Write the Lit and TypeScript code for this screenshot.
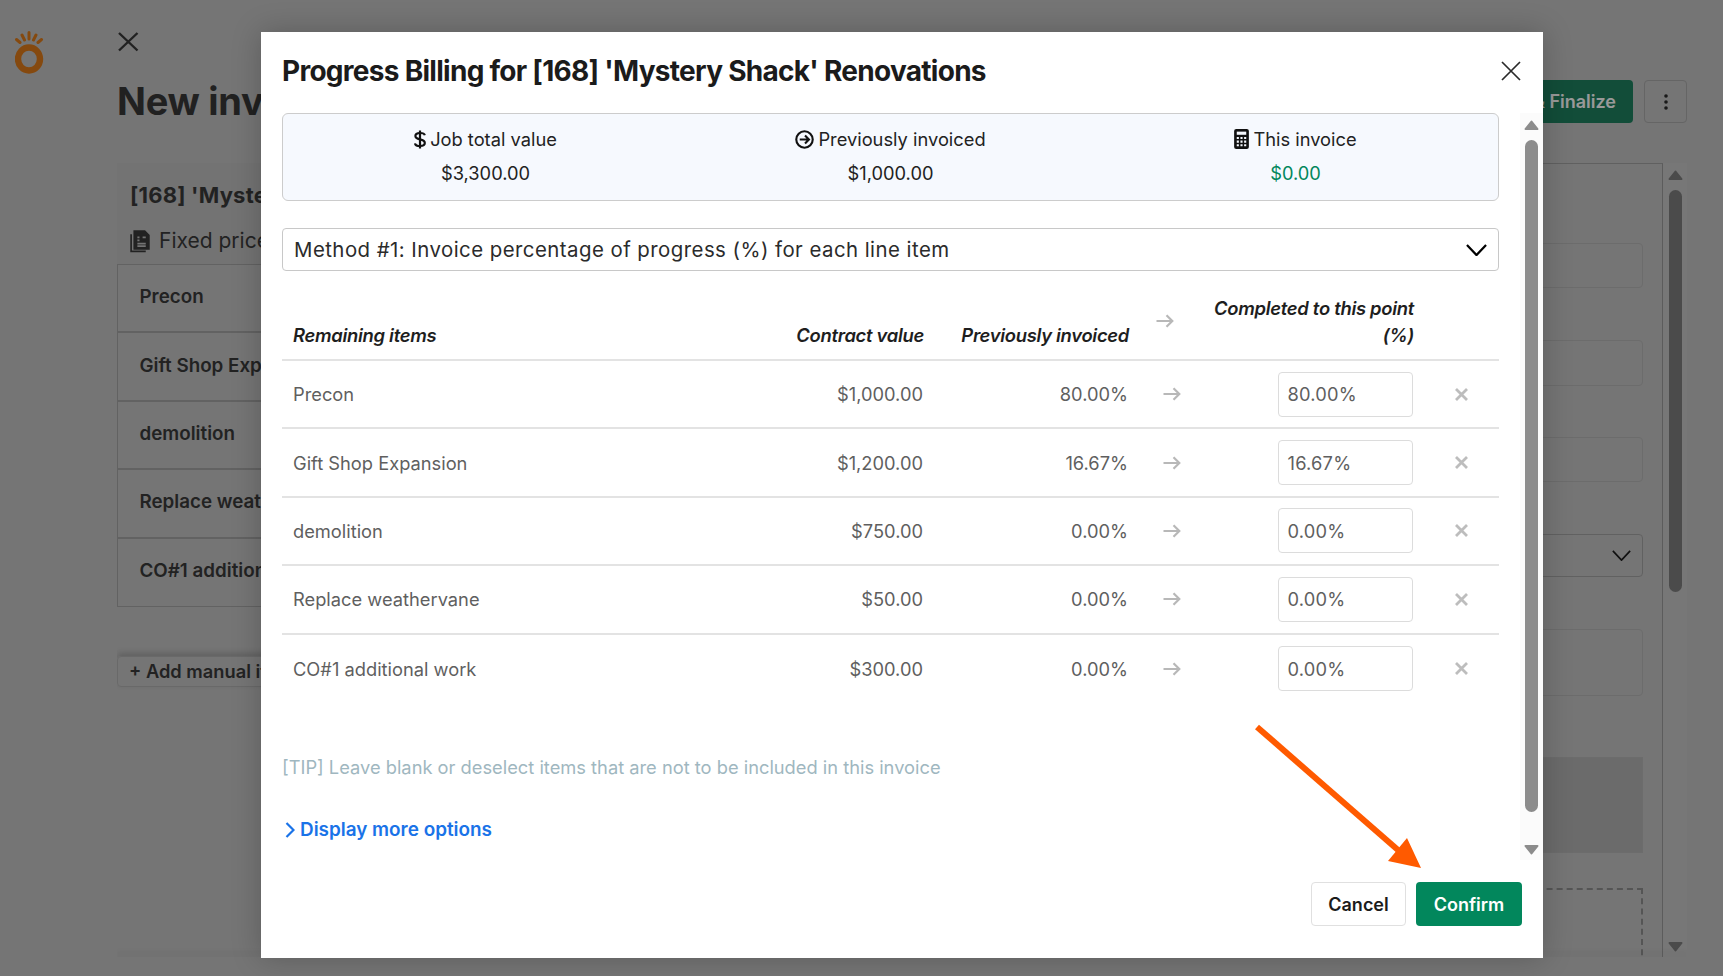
import { LitElement, html, css, svg } from "lit";
import { customElement } from "lit/decorators.js";

const rows = [
  ["Precon", "$1,000.00", "80.00%"],
  ["Gift Shop Expansion", "$1,200.00", "16.67%"],
  ["demolition", "$750.00", "0.00%"],
  ["Replace weathervane", "$50.00", "0.00%"],
  ["CO#1 additional work", "$300.00", "0.00%"],
];

const arrowIcon = html`<svg class="arr" width="18" height="14" viewBox="0 0 18 14" fill="none" stroke="currentColor" stroke-width="2.2"><path d="M0.5 7H16M10.5 1.2L16.3 7L10.5 12.8"/></svg>`;
const chevron = (w: number, h: number, sw: number) => html`<svg width="${w}" height="${h}" viewBox="0 0 22 12" preserveAspectRatio="none" fill="none" stroke="currentColor" stroke-width="${sw}"><path d="M1 1L11 11L21 1"/></svg>`;
const tri = (down: boolean) => html`<svg class="tri" width="15" height="11" viewBox="0 0 15 11" fill="currentColor" stroke="currentColor" stroke-width="2" stroke-linejoin="round">${down ? svg`<path d="M1.5 2H13.5L7.5 9.5Z"/>` : svg`<path d="M7.5 1.5L13.5 9H1.5Z"/>`}</svg>`;

@customElement("app-root")
export class AppRoot extends LitElement {
  static styles = css`
    :host { display: block; position: relative; width: 1723px; height: 976px; overflow: hidden; font-family: Inter, "Liberation Sans", sans-serif; color: #3a3a3a; }
    * { box-sizing: border-box; }
    .page { display: flex; height: 976px; background: #c3c3c3; }
    .logo-col { width: 117px; flex: none; padding: 31px 0 0 15px; }
    .main { width: 1570px; height: 958px; flex: none; display: flex; flex-direction: column; overflow: hidden; }
    .top { display: flex; justify-content: space-between; height: 163px; flex: none; padding: 32px 0 0; }
    .top-left { display: flex; flex-direction: column; }
    .page-x { color: #383838; display: block; }
    .page-title { font-size: 38px; font-weight: 700; line-height: 46px; margin: 26px 0 0; color: #383838; letter-spacing: -0.3px; white-space: nowrap; }
    .actions { display: flex; gap: 11px; padding-top: 48px; }
    .finalize { height: 43px; background: #1f8060; color: #fff; border-radius: 4px; font-size: 18px; font-weight: 600; display: flex; align-items: center; padding: 0 17px; }
    .kebab { width: 43px; height: 43px; border: 1px solid #a8a8a8; border-radius: 4px; display: flex; align-items: center; justify-content: center; color: #2a2a2a; }
    .body { flex: 1; min-height: 0; display: flex; }
    .left { width: 600px; flex: none; display: flex; flex-direction: column; }
    .card-head { height: 101px; padding: 17px 13px 0; background: #c0c0c0; }
    .job { font-size: 22px; font-weight: 700; line-height: 30px; white-space: nowrap; letter-spacing: 0.2px; }
    .fixed { display: flex; align-items: center; gap: 9px; margin-top: 16px; font-size: 21px; line-height: 30px; }
    .card-row { height: 68.4px; border: 1px solid #a4a4a4; border-top-width: 0; border-bottom-width: 2px; display: flex; align-items: center; padding: 0 0 3px 21.5px; font-size: 18.8px; font-weight: 600; }
    .card-row:last-child { border-bottom-width: 1px; }
    .list { border-top: 1px solid #a4a4a4; }
    .add { margin-top: 49px; height: 31px; width: 300px; border: 1px solid #b0b0b0; border-radius: 4px; padding: 0 0 1px 11px; font-size: 18.3px; font-weight: 600; display: flex; align-items: center; box-shadow: 0 -3px 6px rgba(0,0,0,.18); }
    .panel { width: 900px; margin-left: 46px; flex: none; border-top: 1px solid #a0a0a0; border-right: 1px solid #9a9a9a; padding: 79px 19px 0 20px; display: flex; flex-direction: column; overflow: hidden; }
    .f { border: 1px solid #b4b4b4; border-radius: 4px; flex: none; }
    .f1 { height: 45px; }
    .f2 { height: 46px; margin-top: 52px; }
    .f3 { height: 45px; margin-top: 51px; }
    .f4 { height: 43px; margin-top: 52px; display: flex; align-items: center; justify-content: flex-end; padding-right: 11px; border-color: #a2a2a2; color: #1c1c1c; }
    .f5 { height: 67px; margin-top: 52px; }
    .f6 { height: 96px; margin-top: 61px; background: #b2b2b2; border-radius: 0; }
    .f7 { height: 200px; margin-top: 35px; border: 2px dashed #8e8e8e; border-radius: 0; }
    .sb { display: flex; flex-direction: column; flex: none; padding: 7px 0 5px 5px; }
    .sb .tri { display: block; }
    .sb .thumb { width: 13px; margin-top: 9px; border-radius: 7px; }
    .sb .tri:last-child { margin-top: auto; margin-left: -1px; }
    .sb .tri:first-child { margin-left: -1px; }
    .sb-page { width: 24px; padding-left: 6px; color: #7d7d7d; background: #c6c6c6; }
    .sb-page .thumb { height: 402px; background: #7d7d7d; }
    .sb-modal { width: 23px; color: #8c8c8c; background: #fbfbfb; }
    .sb-modal .thumb { height: 672px; background: #8c8c8c; }
    .page-end { height: 1px; flex: none; position: relative; box-shadow: 0 -3px 6px rgba(0,0,0,.22); }

    .overlay { position: absolute; inset: 0; background: rgba(0,0,0,.4); padding: 32px 180px 18px 261px; display: flex; }
    .modal { width: 1282px; height: 926px; background: #fff; box-shadow: 0 0 28px rgba(0,0,0,.22); display: flex; flex-direction: column; color: #1e1e1e; }
    .m-head { height: 81px; flex: none; display: flex; justify-content: space-between; padding: 20px 22px 0 21px; }
    .m-title { margin: 0; font-size: 28px; font-weight: 700; line-height: 38px; color: #1b1b1b; letter-spacing: -0.72px; white-space: nowrap; }
    .m-x { color: #2a2a2a; margin-top: 9px; display: block; }
    .m-mid { flex: 1; min-height: 0; display: flex; }
    .content { width: 1217px; margin: 0 21px; flex: none; }
    .summary { height: 88px; background: #f6f9fe; border: 1px solid #ccc; border-radius: 6px; display: grid; grid-template-columns: repeat(3, 1fr); padding-top: 9px; }
    .sum { display: flex; flex-direction: column; align-items: center; font-size: 18.3px; line-height: 32px; color: #222; }
    .sum-l { display: flex; align-items: center; gap: 4px; margin-bottom: 1.5px; }
    .green { color: #02875c; }
    .select { height: 43px; margin-top: 27px; border: 1px solid #c8c8c8; border-radius: 4px; display: flex; align-items: center; justify-content: space-between; padding: 0 11px; font-size: 20.4px; color: #2b2b2b; letter-spacing: 0.46px; }
    .select svg { color: #000; }
    .thead, .tr { display: grid; grid-template-columns: 418px 234px 205px 61px 225px 74px; }
    .thead { margin-top: 24px; padding-bottom: 11px; border-bottom: 2px solid #e3e3e3; align-items: end; font-size: 18.4px; font-weight: 600; font-style: italic; line-height: 27px; color: #1e1e1e; letter-spacing: -0.28px; height: 66px; }
    .th-name { padding-left: 11px; }
    .th-r { text-align: right; padding-right: 10px; }
    .th-arrow { align-self: center; padding-left: 17px; color: #b8b8b8; display: flex; margin-top: -3px; }
    .th-done { text-align: right; padding-right: 11px; padding-left: 8px; }
    .tr { height: 68.4px; align-items: center; border-bottom: 2px solid #e3e3e3; font-size: 18.3px; color: #5f5f5f; }
    .tbody .tr:last-child { border-bottom: 0; }
    .td-name { padding-left: 11px; }
    .td-r { text-align: right; padding-right: 11px; }
    .td-arrow { padding-left: 24px; color: #b8b8b8; display: flex; }
    .input { justify-self: end; margin-right: 12px; width: 135px; height: 45px; border: 1px solid #dcdcdc; border-radius: 4px; padding-left: 8.5px; display: flex; align-items: center; letter-spacing: 0.2px; }
    .td-x { display: flex; justify-content: center; color: #bdbdbd; padding-right: 2px; }
    .tip { margin-top: 52.5px; font-size: 18.3px; line-height: 24px; color: #9fb7c0; }
    .link { margin-top: 38.5px; display: flex; align-items: center; gap: 5px; padding-left: 3px; font-size: 18.9px; font-weight: 600; line-height: 24px; color: #1a73e8; }
    .m-foot { height: 98px; flex: none; display: flex; justify-content: flex-end; gap: 10px; padding: 22px 21px 0 0; }
    .btn { height: 44px; border-radius: 4px; font-size: 18px; font-weight: 600; display: flex; align-items: center; justify-content: center; }
    .cancel { width: 95px; border: 1px solid #e0e0e0; color: #1b1b1b; }
    .confirm { width: 106px; background: #02875c; color: #fff; }
    .pointer { position: absolute; left: 1250px; top: 720px; }
  `;

  render() {
    return html`
      <div class="page">
        <div class="logo-col">
          <svg width="29" height="43" viewBox="0 0 29 43" fill="none" stroke="#de7b19">
            <path stroke-width="3" stroke-linecap="round" d="M14 1.5V8M7 4L9.5 9M21 4L18.5 9M1.5 8.5L5 11.5M26.5 8.5L23 11.5"/>
            <ellipse cx="14" cy="28" rx="11" ry="11.5" stroke-width="6.4"/>
          </svg>
        </div>
        <div class="main">
          <div class="top">
            <div class="top-left">
              <svg class="page-x" width="22" height="20" viewBox="0 0 22 20" fill="none" stroke="currentColor" stroke-width="2.4"><path d="M2 1L20.5 18.5M20.5 1L2 18.5"/></svg>
              <h1 class="page-title">New invoice</h1>
            </div>
            <div class="actions">
              <div class="finalize">Save &amp; Finalize</div>
              <div class="kebab"><svg width="4" height="16" viewBox="0 0 4 16" fill="currentColor"><circle cx="2" cy="2" r="1.8"/><circle cx="2" cy="8" r="1.8"/><circle cx="2" cy="14" r="1.8"/></svg></div>
            </div>
          </div>
          <div class="body">
            <div class="left">
              <div class="card-head">
                <div class="job">[168] 'Mystery Shack' Renovations</div>
                <div class="fixed">
                  <svg width="20" height="23" viewBox="0 0 19 22" fill="none" stroke="currentColor" stroke-width="1.6"><path d="M1 4V20.5H15"/><path d="M4 1H14L18 5V18H4Z" fill="currentColor"/><path d="M7 7H9M7 10H9M12 7H15M7 13H15M7 15.5H15" stroke="#c0c0c0"/></svg>
                  <span>Fixed price contract</span>
                </div>
              </div>
              <div class="list">
                ${rows.map((r) => html`<div class="card-row">${r[0]}</div>`)}
              </div>
              <div class="add">+ Add manual item</div>
            </div>
            <div class="panel">
              <div class="f f1"></div>
              <div class="f f2"></div>
              <div class="f f3"></div>
              <div class="f f4">${chevron(19, 11, 2)}</div>
              <div class="f f5"></div>
              <div class="f f6"></div>
              <div class="f f7"></div>
            </div>
            <div class="sb sb-page">${tri(false)}<div class="thumb"></div>${tri(true)}</div>
          </div>
          <div class="page-end"></div>
        </div>
      </div>

      <div class="overlay">
        <div class="modal">
          <div class="m-head">
            <h2 class="m-title">Progress Billing for [168] 'Mystery Shack' Renovations</h2>
            <svg class="m-x" width="20" height="20" viewBox="0 0 20 20" fill="none" stroke="currentColor" stroke-width="1.7"><path d="M1 1L19 19M19 1L1 19"/></svg>
          </div>
          <div class="m-mid">
            <div class="content">
              <div class="summary">
                <div class="sum">
                  <div class="sum-l">
                    <svg width="12" height="19" viewBox="0 0 12 19" fill="none" stroke="#111" stroke-width="2.2"><path d="M6 0.5V18.5"/><path d="M10.8 5.3C10.4 3.6 8.5 3 6 3C3.4 3 1.4 4 1.4 6C1.4 8.2 3.6 8.8 6 9.4C8.6 10 10.8 10.7 10.8 13C10.8 15 8.8 16 6 16C3.4 16 1.4 15.2 1 13.4"/></svg>
                    <span>Job total value</span>
                  </div>
                  <div>$3,300.00</div>
                </div>
                <div class="sum">
                  <div class="sum-l">
                    <svg width="19" height="19" viewBox="0 0 18 18" fill="none" stroke="#111" stroke-width="2"><circle cx="9" cy="9" r="7.8"/><path d="M4.5 9H13M9.5 5.3L13.2 9L9.5 12.7"/></svg>
                    <span>Previously invoiced</span>
                  </div>
                  <div>$1,000.00</div>
                </div>
                <div class="sum">
                  <div class="sum-l">
                    <svg width="15" height="20" viewBox="0 0 14 19"><rect width="14" height="19" rx="2" fill="#111"/><rect x="2.5" y="2.5" width="9" height="3" fill="#f6f9fe"/><path fill="#f6f9fe" d="M2.5 7.5h2v2h-2zM6 7.5h2v2H6zM9.5 7.5h2v2h-2zM2.5 11h2v2h-2zM6 11h2v2H6zM9.5 11h2v2h-2zM2.5 14.5h2v2h-2zM6 14.5h2v2H6zM9.5 14.5h2v2h-2z"/></svg>
                    <span>This invoice</span>
                  </div>
                  <div class="green">$0.00</div>
                </div>
              </div>
              <div class="select">
                <span>Method #1: Invoice percentage of progress (%) for each line item</span>
                ${chevron(21, 12, 2.4)}
              </div>
              <div class="thead">
                <div class="th-name">Remaining items</div>
                <div class="th-r">Contract value</div>
                <div class="th-r">Previously invoiced</div>
                <div class="th-arrow">${arrowIcon}</div>
                <div class="th-done">Completed to this point (%)</div>
                <div></div>
              </div>
              <div class="tbody">
                ${rows.map((r) => html`
                  <div class="tr">
                    <div class="td-name">${r[0]}</div>
                    <div class="td-r">${r[1]}</div>
                    <div class="td-r">${r[2]}</div>
                    <div class="td-arrow">${arrowIcon}</div>
                    <div class="input">${r[2]}</div>
                    <div class="td-x"><svg width="13" height="13" viewBox="0 0 13 13" fill="none" stroke="currentColor" stroke-width="2.8"><path d="M1 1L12 12M12 1L1 12"/></svg></div>
                  </div>`)}
              </div>
              <div class="tip">[TIP] Leave blank or deselect items that are not to be included in this invoice</div>
              <div class="link">
                <svg width="10" height="16" viewBox="0 0 10 16" fill="none" stroke="currentColor" stroke-width="2.2"><path d="M1.5 1L8.5 8L1.5 15"/></svg>
                <span>Display more options</span>
              </div>
            </div>
            <div class="sb sb-modal">${tri(false)}<div class="thumb"></div>${tri(true)}</div>
          </div>
          <div class="m-foot">
            <div class="btn cancel">Cancel</div>
            <div class="btn confirm">Confirm</div>
          </div>
        </div>
      </div>

      <svg class="pointer" width="180" height="155" viewBox="0 0 180 155" fill="#ff5a00" stroke="none">
        <path d="M7 7L148 130" stroke="#ff5a00" stroke-width="6"/>
        <path d="M157 118L171 148L138 141Z"/>
      </svg>
    `;
  }
}
